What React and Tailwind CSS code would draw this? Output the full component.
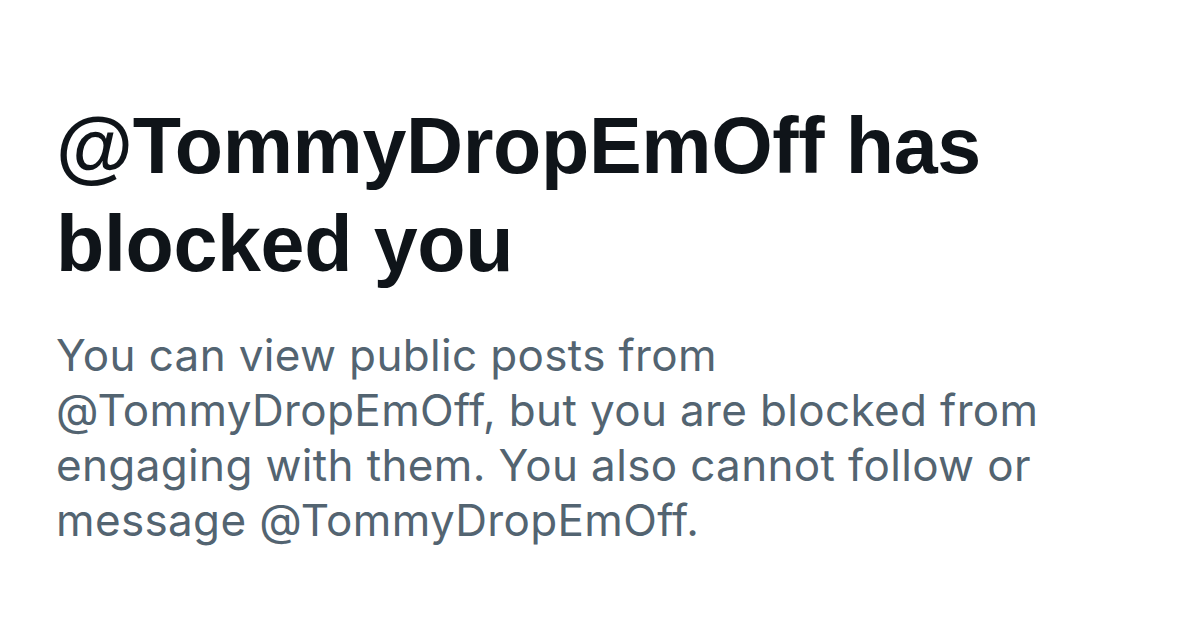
export default function App() {
  return (
    <div className="w-[1200px] h-[644px] bg-white overflow-hidden">
      <div className="pl-[56px] pr-[60px] pt-[97px]">
        <h1 className="font-['Liberation_Sans',Arial,sans-serif] font-bold text-[79px] leading-[98px] tracking-[-0.35px] text-[#0f1419]">
          @TommyDropEmOff has
          <br />
          blocked you
        </h1>
        <p className="mt-[35px] font-['Inter',sans-serif] text-[44px] leading-[55px] tracking-[0.35px] text-[#536471]">
          You can view public posts from
          <br />
          @TommyDropEmOff, but you are blocked from
          <br />
          engaging with them. You also cannot follow or
          <br />
          message @TommyDropEmOff.
        </p>
      </div>
    </div>
  );
}
